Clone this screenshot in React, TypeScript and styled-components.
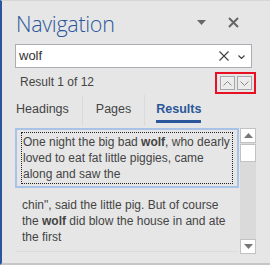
import React from 'react'
import styled, {createGlobalStyle} from 'styled-components'

const GlobalStyle = createGlobalStyle`
  html, body {
    margin: 0;
    padding: 0;
    background: #e6e6e6;
  }
  * {
    box-sizing: border-box;
  }
`

const Panel = styled.div`
  width: 270px;
  height: 265px;
  background: #e6e6e6;
  border-left: 2px solid #2b579a;
  border-top: 1px solid #d6d6d6;
  border-bottom: 2px solid #c6c6c6;
  padding: 0 14px 0 13px;
  display: flex;
  flex-direction: column;
  font-family: 'Liberation Sans', Arial, sans-serif;
  color: #444444;
  overflow: hidden;
`

const Header = styled.div`
  height: 43px;
  display: flex;
  align-items: center;
  padding-left: 1px;
`

const Title = styled.div`
  flex: 1;
  font-family: 'Open Sans', sans-serif;
  font-weight: 300;
  font-size: 21.5px;
  color: #2b579a;
  letter-spacing: -0.3px;
  padding-top: 1px;
`

const IconButton = styled.div<{$w: number}>`
  width: ${({$w}) => $w}px;
  display: flex;
  align-items: center;
  justify-content: center;
`

const SearchBox = styled.div`
  width: 237px;
  height: 24px;
  background: #ffffff;
  border: 1px solid #abadb3;
  display: flex;
  align-items: center;
  padding: 0 6px 0 3px;
  font-size: 13px;
  color: #333333;
`

const SearchText = styled.div`
  flex: 1;
  padding-bottom: 1px;
`

const ResultRow = styled.div`
  height: 27px;
  display: flex;
  align-items: center;
  justify-content: space-between;
  padding-left: 5px;
  font-size: 12px;
`

const NavBox = styled.div`
  width: 41px;
  height: 22px;
  border: 2px solid #e81123;
  display: flex;
  align-items: center;
  justify-content: center;
  gap: 2px;
  margin-top: 3px;
`

const NavButton = styled.div`
  width: 15px;
  height: 14px;
  border: 1px solid #a8a8a8;
  background: #ececec;
  display: flex;
  align-items: center;
  justify-content: center;
`

const Tabs = styled.div`
  height: 31px;
  display: flex;
  align-items: stretch;
`

const Tab = styled.div<{$active?: boolean; $first?: boolean}>`
  position: relative;
  display: flex;
  align-items: center;
  padding: 0 ${({$active}) => ($active ? 0 : 13)}px 3px ${({$first, $active}) => ($first ? 1 : $active ? 11 : 13)}px;
  font-size: 12.5px;
  font-weight: ${({$active}) => ($active ? 700 : 400)};
  color: ${({$active}) => ($active ? '#2b579a' : '#444444')};
  & + & {
    border-left: 1px solid #dadada;
  }
`

const Underline = styled.div`
  position: absolute;
  left: 11px;
  right: 0;
  bottom: 3px;
  height: 3px;
  background: #2b579a;
`

const ResultsArea = styled.div`
  display: flex;
  height: 126px;
  margin-top: 2px;
`

const List = styled.div`
  width: 226px;
  display: flex;
  flex-direction: column;
`

const Item = styled.div<{$selected?: boolean}>`
  border: 2px solid ${({$selected}) => ($selected ? '#a9c3e8' : 'transparent')};
  border-bottom: ${({$selected}) => ($selected ? '2px solid #a9c3e8' : '1px solid #dcdcdc')};
  padding: ${({$selected}) => ($selected ? '2px 4px' : '7px 5px 6px')};
  font-size: 12px;
  line-height: 16px;
  color: #444444;
  white-space: nowrap;
`

const Focus = styled.div`
  border: 1px dotted #222222;
  padding: 1px;
`

const Scrollbar = styled.div`
  width: 16px;
  background: #dadada;
  display: flex;
  flex-direction: column;
  margin-left: 1px;
`

const ScrollButton = styled.div`
  height: 15px;
  background: #ffffff;
  border: 1px solid #c2c2c2;
  display: flex;
  align-items: center;
  justify-content: center;
`

const Thumb = styled.div`
  height: 18px;
  margin-top: 1px;
  background: #ffffff;
  border: 1px solid #c2c2c2;
`

const Spacer = styled.div`
  flex: 1;
`

const App: React.FC = () => {
    return (
        <>
            <GlobalStyle/>
            <Panel>
                <Header>
                    <Title>Navigation</Title>
                    <IconButton $w={18}>
                        <svg width="9" height="5" viewBox="0 0 9 5">
                            <path d="M0 0 L9 0 L4.5 5 Z" fill="#666666"/>
                        </svg>
                    </IconButton>
                    <IconButton $w={46}>
                        <svg width="11" height="11" viewBox="0 0 11 11">
                            <path d="M1 1 L10 10 M10 1 L1 10" stroke="#666666" strokeWidth="2"/>
                        </svg>
                    </IconButton>
                </Header>
                <SearchBox>
                    <SearchText>wolf</SearchText>
                    <svg width="10" height="10" viewBox="0 0 10 10">
                        <path d="M0.5 0.5 L9.5 9.5 M9.5 0.5 L0.5 9.5" stroke="#444444" strokeWidth="1.2"/>
                    </svg>
                    <svg width="7" height="4" viewBox="0 0 7 4" style={{marginLeft: 9, marginTop: 2}}>
                        <path d="M0.5 0.5 L3.5 3.5 L6.5 0.5" stroke="#444444" strokeWidth="1.2" fill="none"/>
                    </svg>
                </SearchBox>
                <ResultRow>
                    <span>Result 1 of 12</span>
                    <NavBox>
                        <NavButton>
                            <svg width="9" height="5" viewBox="0 0 9 5">
                                <path d="M0.5 4.5 L4.5 0.5 L8.5 4.5" stroke="#8a8a8a" fill="none"/>
                            </svg>
                        </NavButton>
                        <NavButton>
                            <svg width="9" height="5" viewBox="0 0 9 5">
                                <path d="M0.5 0.5 L4.5 4.5 L8.5 0.5" stroke="#8a8a8a" fill="none"/>
                            </svg>
                        </NavButton>
                    </NavBox>
                </ResultRow>
                <Tabs>
                    <Tab $first>Headings</Tab>
                    <Tab>Pages</Tab>
                    <Tab $active>
                        Results
                        <Underline/>
                    </Tab>
                </Tabs>
                <ResultsArea>
                    <List>
                        <Item $selected>
                            <Focus>
                                One night the big bad <b>wolf</b>, who dearly<br/>
                                loved to eat fat little piggies, came<br/>
                                along and saw the
                            </Focus>
                        </Item>
                        <Item>
                            chin", said the little pig. But of course<br/>
                            the <b>wolf</b> did blow the house in and ate<br/>
                            the first
                        </Item>
                    </List>
                    <Scrollbar>
                        <ScrollButton>
                            <svg width="9" height="5" viewBox="0 0 9 5">
                                <path d="M0 5 L4.5 0 L9 5 Z" fill="#777777"/>
                            </svg>
                        </ScrollButton>
                        <Thumb/>
                        <Spacer/>
                        <ScrollButton>
                            <svg width="9" height="5" viewBox="0 0 9 5">
                                <path d="M0 0 L9 0 L4.5 5 Z" fill="#777777"/>
                            </svg>
                        </ScrollButton>
                    </Scrollbar>
                </ResultsArea>
            </Panel>
        </>
    )
}

export default App
